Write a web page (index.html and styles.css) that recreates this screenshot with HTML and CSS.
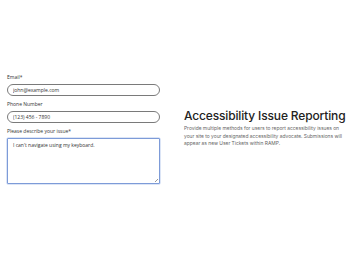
FILE: index.html
```html
<!DOCTYPE html>
<html>
<head>
<meta charset="utf-8">
<link rel="stylesheet" href="styles.css">
</head>
<body>
<main class="page">
  <form class="form">
    <label class="label" for="email">Email*</label>
    <input class="field" id="email" type="text" value="john@example.com">
    <label class="label" for="phone">Phone Number</label>
    <input class="field" id="phone" type="text" value="(123) 456 - 7890">
    <label class="label" for="issue">Please describe your issue*</label>
    <div class="area-wrap">
      <textarea class="area" id="issue">I can't navigate using my keyboard.</textarea>
    </div>
  </form>
  <section class="intro">
    <h1 class="title">Accessibility Issue Reporting</h1>
    <p class="desc">Provide multiple methods for users to report accessibility issues on your site to your designated accessibility advocate. Submissions will appear as new User Tickets within RAMP.</p>
  </section>
</main>
</body>
</html>
```
FILE: styles.css
```css
* { box-sizing: border-box; }
html, body { margin: 0; background: #fff; }
body { font-family: "Open Sans", "Noto Sans", sans-serif; }
.page {
  height: 263px;
  display: grid;
  grid-template-columns: 153px 160px;
  column-gap: 24px;
  padding: 0 6px 0 7px;
  align-items: start;
}
.form {
  display: flex;
  flex-direction: column;
  padding-top: 74px;
}
.label {
  font-size: 5px;
  line-height: 6px;
  color: #333;
  margin-bottom: 4px;
}
.field {
  height: 12px;
  border: 1px solid #7a7a7a;
  border-radius: 6px;
  padding: 0 5px;
  font-family: inherit;
  font-size: 5px;
  color: #333;
  margin: 0 0 5px;
  outline: none;
}
.area-wrap {
  position: relative;
  height: 46px;
}
.area-wrap::after {
  content: "";
  position: absolute;
  right: 2px;
  bottom: 2px;
  width: 3px;
  height: 3px;
  background: linear-gradient(135deg, transparent 45%, #9a9a9a 45%, #9a9a9a 60%, transparent 60%);
}
.area {
  display: block;
  width: 100%;
  height: 46px;
  border: 1px solid #7d9bd8;
  box-shadow: 0 0 0 0.5px #b9cbee;
  border-radius: 1px;
  padding: 3px 5px;
  font-family: inherit;
  font-size: 5px;
  line-height: 7px;
  color: #333;
  margin: 0;
  resize: none;
  outline: none;
}
.intro { padding-top: 109px; }
.title {
  font-family: Inter, sans-serif;
  font-weight: 500;
  font-size: 12px;
  line-height: 14px;
  color: #222;
  margin: 0 0 2px;
  white-space: nowrap;
  letter-spacing: -0.15px;
}
.desc {
  font-family: Inter, sans-serif;
  font-size: 4.9px;
  line-height: 7.7px;
  color: #666;
  margin: 0;
}
```
